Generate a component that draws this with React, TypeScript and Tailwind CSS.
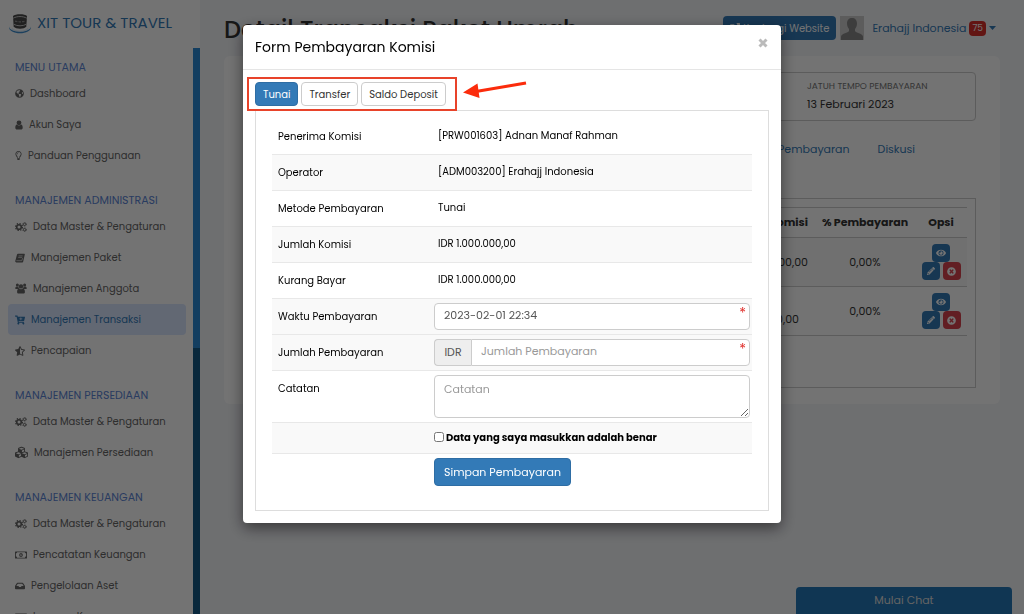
import { useState } from 'react';
import type { ReactNode } from 'react';
import {
  FaCartPlus, FaCubes, FaExternalLinkAlt, FaEye, FaGlobeAmericas, FaInbox, FaPencilAlt,
  FaRegLightbulb, FaRegMoneyBillAlt, FaStarHalfAlt, FaTimesCircle,
} from 'react-icons/fa';

type MenuItem = { label: string; icon: ReactNode; active?: boolean };

function CogsIcon() {
  return (
    <svg viewBox="0 0 12 10" className="h-[10px] w-3 shrink-0" fill="none" stroke="currentColor" aria-hidden="true">
      <circle cx="4" cy="5" r="2.300" strokeWidth="1.600" />
      <circle cx="4" cy="5" r="3.500" strokeWidth="1.100" strokeDasharray="1.400 1.350" />
      <circle cx="9.600" cy="2.300" r="1.200" strokeWidth="0.900" />
      <circle cx="9.600" cy="2.300" r="1.900" strokeWidth="0.700" strokeDasharray="1 0.990" />
      <circle cx="9.600" cy="7.700" r="1.200" strokeWidth="0.900" />
      <circle cx="9.600" cy="7.700" r="1.900" strokeWidth="0.700" strokeDasharray="1 0.990" />
    </svg>
  );
}

function UserIcon() {
  return (
    <svg viewBox="0 0 8 10" className="h-[10px] w-2 shrink-0" fill="currentColor" aria-hidden="true">
      <circle cx="4" cy="2.800" r="2.400" />
      <path d="M2 4.500C.8 4.700.3 6 .3 7.800C.3 9 1 9.600 2 9.600h4c1 0 1.700-.6 1.700-1.800C7.700 6 7.200 4.700 6 4.500c-1 1.200-3 1.200-4 0z" />
    </svg>
  );
}

function UsersIcon() {
  return (
    <svg viewBox="0 0 12 11" className="h-[11px] w-3 shrink-0" fill="currentColor" aria-hidden="true">
      <circle cx="2.400" cy="2" r="1.500" />
      <circle cx="9.600" cy="2" r="1.500" />
      <circle cx="6" cy="3.400" r="2.200" />
      <path d="M.3 5.800C.3 4.200.8 3.500 1.600 3.500l1.900.3c0 .9.300 1.600.8 2.100H.6zM11.700 5.800c0-1.600-.5-2.300-1.300-2.300l-1.900.3c0 .9-.3 1.600-.8 2.100h3.700z" />
      <path d="M4.200 5.600C2.800 5.700 2.100 7 2.100 9c0 1 .6 1.600 1.600 1.600h4.600c1 0 1.600-.6 1.600-1.600c0-2-.7-3.300-2.100-3.400c-1 1-2.600 1-3.600 0z" />
    </svg>
  );
}

function BookIcon() {
  return (
    <svg viewBox="0 0 10 10" className="size-[10px] shrink-0" aria-hidden="true">
      <path d="M3 .8h6.300c.4 0 .6.300.5.700L8.200 8.400c-.1.600-.6 1-1.200 1H1.400C.6 9.400.1 8.700.3 8L2 1.600C2.100 1.100 2.500.8 3 .8z" fill="currentColor" />
      <path d="M3.600 2.900h4M3.200 4.400h4M1.300 7.700h5.500l.8-2.500" stroke="white" strokeWidth="0.600" fill="none" />
    </svg>
  );
}

const menu: { title: string; items: MenuItem[] }[] = [
  {
    title: 'MENU UTAMA',
    items: [
      { label: 'Dashboard', icon: <FaGlobeAmericas size={9} /> },
      { label: 'Akun Saya', icon: <UserIcon /> },
      { label: 'Panduan Penggunaan', icon: <FaRegLightbulb size={9} className="-mx-px" /> },
    ],
  },
  {
    title: 'MANAJEMEN ADMINISTRASI',
    items: [
      { label: 'Data Master & Pengaturan', icon: <CogsIcon /> },
      { label: 'Manajemen Paket', icon: <BookIcon /> },
      { label: 'Manajemen Anggota', icon: <UsersIcon /> },
      { label: 'Manajemen Transaksi', icon: <FaCartPlus size={10} />, active: true },
      { label: 'Pencapaian', icon: <FaStarHalfAlt size={10} /> },
    ],
  },
  {
    title: 'MANAJEMEN PERSEDIAAN',
    items: [
      { label: 'Data Master & Pengaturan', icon: <CogsIcon /> },
      { label: 'Manajemen Persediaan', icon: <FaCubes size={13} /> },
    ],
  },
  {
    title: 'MANAJEMEN KEUANGAN',
    items: [
      { label: 'Data Master & Pengaturan', icon: <CogsIcon /> },
      { label: 'Pencatatan Keuangan', icon: <FaRegMoneyBillAlt size={12} /> },
      { label: 'Pengelolaan Aset', icon: <FaInbox size={10} /> },
      { label: 'Laporan Keuangan', icon: <FaRegMoneyBillAlt size={12} /> },
    ],
  },
];

const komisi = [
  { penerima: 'Adnan Manaf Rahman', nominal: ['1.000.000,00'], persen: '0,00%' },
  { penerima: 'Erahajj Indonesia', nominal: ['IDR', '500.000,00'], persen: '0,00%' },
];

const detail = [
  { label: 'Penerima Komisi', value: '[PRW001603] Adnan Manaf Rahman' },
  { label: 'Operator', value: '[ADM003200] Erahajj Indonesia' },
  { label: 'Metode Pembayaran', value: 'Tunai' },
  { label: 'Jumlah Komisi', value: 'IDR 1.000.000,00' },
  { label: 'Kurang Bayar', value: 'IDR 1.000.000,00' },
];

const metode = ['Tunai', 'Transfer', 'Saldo Deposit'];

function Logo() {
  return (
    <svg viewBox="0 0 24 24" className="size-6 shrink-0" aria-hidden="true">
      <path d="M1 14.500c-1 9 23 9 22 0c-.5 3.500-5 5-11 5s-10.500-1.500-11-5z" fill="#3f8fd0" />
      <path d="M4.500 16c2 3.500 13 3.500 15 0l1 .8c-2 3.800-15 3.800-17 0z" fill="#dcecf9" />
      <path d="M5 4c2-2.200 12-2.200 14 0l-.7 10.500c-2 3-10.600 3-12.600 0z" fill="#4a4a4a" />
      <path d="M5.200 6.200c4-2.200 9.600-2.200 13.600 0M5.800 12.300c3.500 2 8.900 2 12.400 0" stroke="#c4c4c4" strokeWidth="1" fill="none" />
      <path d="M7 9.200c3 .8 7 .8 10 0" stroke="#8f8f8f" strokeWidth="1.200" strokeDasharray="2.500 1" fill="none" />
    </svg>
  );
}

function Sidebar() {
  return (
    <aside className="flex w-[200px] shrink-0 flex-col bg-white">
      <a href="#" className="flex h-12 shrink-0 items-center gap-[5px] pb-px pl-2 text-[15px] whitespace-nowrap text-[#337ab7]">
        <Logo />
        XIT TOUR &amp; TRAVEL
      </a>
      <div className="flex min-h-0 flex-1">
        <nav className="min-w-0 flex-1 overflow-hidden pt-2 pr-[7px] pl-2">
          {menu.map((section) => (
            <section key={section.title} className="pb-[18px]">
              <h2 className="px-[7px] text-[11px] leading-[22px] whitespace-nowrap text-[#5c85d6]">{section.title}</h2>
              <ul>
                {section.items.map((item) => (
                  <li key={item.label}>
                    <a
                      href="#"
                      className={`flex h-[31px] items-center gap-[6px] rounded px-[7px] text-[10px] whitespace-nowrap ${
                        item.active ? 'bg-[#d9e6ff] text-[#337ab7]' : 'text-[#666]'
                      }`}
                    >
                      {item.icon}
                      {item.label}
                    </a>
                  </li>
                ))}
              </ul>
            </section>
          ))}
        </nav>
        <div className="w-[7px] shrink-0 bg-[#155a85]">
          <div className="h-[300px] bg-[#2c8ad6]" />
        </div>
      </div>
    </aside>
  );
}

function Header() {
  return (
    <header className="flex h-6 items-center justify-between">
      <h1 className="pt-1 text-2xl font-medium whitespace-nowrap text-[#333]">Detail Transaksi Paket Umrah</h1>
      <div className="flex items-center gap-1 pr-1 whitespace-nowrap">
        <a href="#" className="flex h-6 items-center gap-[3px] rounded-sm bg-[#337ab7] px-[7px] text-[10px] text-white">
          <FaExternalLinkAlt size={10} />
          Kunjungi Website
        </a>
        <svg viewBox="0 0 24 24" className="size-6 bg-[#ccc]" aria-hidden="true">
          <path d="M12 2c3 0 5 2 5 5.500c0 2.500-1 4.500-2 5.500v2c1 2 7 2 8 5.500V24H1v-3.500C2 17 8 17 9 15v-2c-1-1-2-3-2-5.500C7 4 9 2 12 2z" fill="#888" />
        </svg>
        <a href="#" className="flex items-center gap-[3px] pl-1 text-[11px] text-[#337ab7]">
          Erahajj Indonesia
          <span className="rounded-sm bg-[#d9302c] px-[3px] text-[9px] leading-[15px] text-white">75</span>
          <svg viewBox="0 0 7 4" className="h-1 w-[7px]" fill="currentColor" aria-hidden="true">
            <path d="M0 0h7L3.500 4z" />
          </svg>
        </a>
      </div>
    </header>
  );
}

function OpsiButton({ label, danger, children }: { label: string; danger?: boolean; children: ReactNode }) {
  return (
    <button
      type="button"
      aria-label={label}
      className={`flex h-[18px] w-[18px] items-center justify-center rounded-sm text-white ${danger ? 'bg-[#d9434f]' : 'bg-[#337ab7]'}`}
    >
      {children}
    </button>
  );
}

function DetailTransaksi() {
  return (
    <div className="mt-4 rounded-md bg-white px-6 pt-4 pb-4 text-[11px] text-[#333]">
      <div className="flex h-[49px] items-center rounded-sm border border-[#ccc] px-4 pb-[3px] leading-[18px]">
        <div className="flex-1">
          <p className="text-[9px] leading-[18px] text-[#777]">KODE TRANSAKSI</p>
          <p>Paket Umrah</p>
        </div>
        <div className="w-[152px]">
          <p className="text-[9px] leading-[18px] whitespace-nowrap text-[#777]">JATUH TEMPO PEMBAYARAN</p>
          <p>13 Februari 2023</p>
        </div>
      </div>
      <nav className="mt-5 flex justify-end gap-7 pr-[61px] leading-4 text-[#337ab7]">
        <a href="#">Pembayaran</a>
        <a href="#">Diskusi</a>
      </nav>
      <div className="mt-[41px] border border-[#ccc] px-2 pt-2 pb-[51px]">
        <table className="w-full table-fixed border-collapse">
          <thead>
            <tr className="h-[30px] border-t border-b border-[#ccc]">
              <th className="text-left font-bold">Penerima</th>
              <th className="w-[120px] pr-[7px] text-right font-bold">Komisi</th>
              <th className="w-[100px] font-bold whitespace-nowrap">% Pembayaran</th>
              <th className="w-[52px] font-bold">Opsi</th>
            </tr>
          </thead>
          <tbody>
            {komisi.map((row, i) => (
              <tr key={row.penerima} className={`h-[49px] border-b border-[#ccc] ${i % 2 === 0 ? 'bg-[#f9f9f9]' : ''}`}>
                <td>{row.penerima}</td>
                <td className={i === 0 ? 'pr-[7px]' : 'pr-4'}>
                  <div className="ml-auto w-fit leading-4">
                    {row.nominal.map((line) => (
                      <div key={line}>{line}</div>
                    ))}
                  </div>
                </td>
                <td className="text-center">{row.persen}</td>
                <td>
                  <div className="flex flex-col items-center">
                    <OpsiButton label="Lihat"><FaEye size={10} /></OpsiButton>
                    <div className="flex gap-[3px]">
                      <OpsiButton label="Ubah"><FaPencilAlt size={8} /></OpsiButton>
                      <OpsiButton label="Hapus" danger><FaTimesCircle size={9} /></OpsiButton>
                    </div>
                  </div>
                </td>
              </tr>
            ))}
          </tbody>
        </table>
      </div>
    </div>
  );
}

// Tanda bintang untuk kolom yang wajib diisi
function Wajib() {
  return <span className="absolute top-[2px] right-1 text-[14px] leading-4 text-[#e0302c]">*</span>;
}

function FormRow({ label, htmlFor, striped, children }: { label?: string; htmlFor?: string; striped?: boolean; children: ReactNode }) {
  return (
    <div className={`flex border-t border-[#e8e8e8] py-1 pr-[2px] pl-[6px] ${striped ? 'bg-[#f9f9f9]' : ''}`}>
      <div className="w-[156px] shrink-0 leading-[27px]">
        {label && <label htmlFor={htmlFor}>{label}</label>}
      </div>
      <div className="min-w-0 flex-1">{children}</div>
    </div>
  );
}

function FormPembayaran() {
  const [tab, setTab] = useState('Tunai');
  const [waktu, setWaktu] = useState('2023-02-01 22:34');
  const [jumlah, setJumlah] = useState('');
  const [catatan, setCatatan] = useState('');
  const [benar, setBenar] = useState(false);

  return (
    <div
      role="dialog"
      aria-labelledby="judul-form"
      className="relative mx-auto mt-[25px] w-full max-w-[538px] rounded bg-white text-[10px] text-black shadow-[0_5px_15px_rgba(0,0,0,0.5)]"
    >
      <div className="flex h-[45px] items-center justify-between border-b border-[#e5e5e5] px-3">
        <h2 id="judul-form" className="text-[14px]">Form Pembayaran Komisi</h2>
        <button type="button" aria-label="Tutup" className="pb-2 text-[#bbb]">
          <svg viewBox="0 0 12 12" className="size-3" aria-hidden="true">
            <path d="M2.500 2.500l7 7M9.500 2.500l-7 7" stroke="currentColor" strokeWidth="3" />
          </svg>
        </button>
      </div>

      <div className="px-3 pt-3 pb-3">
        <div className="relative flex gap-[3px]">
          {metode.map((nama) => (
            <button
              key={nama}
              type="button"
              onClick={() => setTab(nama)}
              className={`h-6 rounded-sm border px-[7px] text-[10px] ${
                tab === nama ? 'border-[#2e6da4] bg-[#337ab7] text-white' : 'border-[#ccc] bg-white text-[#333]'
              }`}
            >
              {nama}
            </button>
          ))}
          {/* Penanda pilihan metode pembayaran */}
          <svg viewBox="0 0 284 36" className="pointer-events-none absolute -top-[6px] -left-[9px] h-9 w-[284px]" aria-hidden="true">
            <rect x="2" y="2" width="208" height="32" fill="none" stroke="#e8432a" strokeWidth="2" />
            <path d="M230 15.500L280 7" stroke="#fb2c0c" strokeWidth="3" />
            <path d="M217 16.500L231.500 7.500l2 14.500z" fill="#fb2c0c" />
          </svg>
        </div>

        <form onSubmit={(e) => e.preventDefault()} className="mt-1 border border-[#ddd] px-4 pt-[7px] pb-5">
          <dl>
            {detail.map((row, i) => (
              <div
                key={row.label}
                className={`flex h-9 border-t px-[6px] ${i > 0 ? 'border-[#e8e8e8]' : 'border-transparent'} ${
                  i % 2 === 1 ? 'bg-[#f9f9f9]' : ''
                }`}
              >
                <dt className="w-40 shrink-0 leading-9">{row.label}</dt>
                <dd className="leading-[34px]">{row.value}</dd>
              </div>
            ))}
          </dl>
          <FormRow label="Waktu Pembayaran" htmlFor="waktu" striped>
            <div className="relative">
              <input
                id="waktu"
                type="text"
                value={waktu}
                onChange={(e) => setWaktu(e.target.value)}
                className="block h-[27px] w-full rounded-sm border border-[#ccc] bg-white px-[9px] pb-[2px] text-[11px] text-[#555]"
              />
              <Wajib />
            </div>
          </FormRow>
          <FormRow label="Jumlah Pembayaran" htmlFor="jumlah" striped>
            <div className="relative flex">
              <span className="flex w-[37px] items-center justify-center rounded-l-sm border border-r-0 border-[#ccc] bg-[#eee] text-[11px] text-[#555]">IDR</span>
              <input
                id="jumlah"
                type="text"
                placeholder="Jumlah Pembayaran"
                value={jumlah}
                onChange={(e) => setJumlah(e.target.value)}
                className="h-[27px] min-w-0 flex-1 rounded-r-sm border border-[#ccc] bg-white px-[9px] pb-[2px] text-[11px] text-[#555] placeholder:text-[#999]"
              />
              <Wajib />
            </div>
          </FormRow>
          <FormRow label="Catatan" htmlFor="catatan">
            <textarea
              id="catatan"
              placeholder="Catatan"
              value={catatan}
              onChange={(e) => setCatatan(e.target.value)}
              className="block h-[43px] w-full resize-y rounded-sm border border-[#ccc] bg-white px-[9px] py-1 text-[11px] leading-[18px] text-[#555] placeholder:text-[#999]"
            />
          </FormRow>
          <FormRow striped>
            <label className="flex h-[22px] items-center gap-[2px] pb-[2px] font-bold">
              <input type="checkbox" checked={benar} onChange={(e) => setBenar(e.target.checked)} className="size-[10px]" />
              Data yang saya masukkan adalah benar
            </label>
          </FormRow>
          <FormRow>
            <button type="submit" className="h-7 rounded-sm border border-[#2e6da4] bg-[#337ab7] px-[9px] text-[11px] text-white">
              Simpan Pembayaran
            </button>
          </FormRow>
        </form>
      </div>
    </div>
  );
}

function App() {
  return (
    <div className="relative flex h-screen overflow-hidden bg-[#f4f5f9] font-['Poppins','Inter',sans-serif]">
      <Sidebar />
      <main className="min-w-0 flex-1 px-6 pt-4">
        <Header />
        <DetailTransaksi />
      </main>
      <button type="button" className="fixed right-3 bottom-0 h-[27px] w-[216px] rounded-t-sm bg-[#2579b8] text-[11px] text-[#ddd]">
        Mulai Chat
      </button>
      <div className="fixed inset-0 bg-black/55">
        <FormPembayaran />
      </div>
    </div>
  );
}

export default App;
